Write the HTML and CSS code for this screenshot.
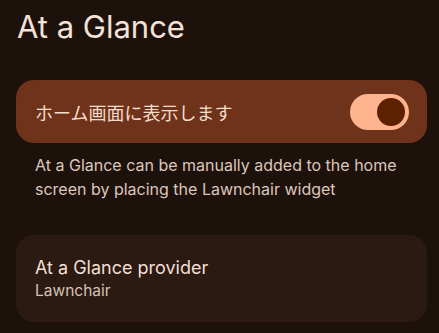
FILE: index.html
```html
<!DOCTYPE html>
<html lang="ja">
<head>
<meta charset="utf-8">
<link rel="stylesheet" href="styles.css">
</head>
<body>
<div class="page">
  <h1 class="title">At a Glance</h1>
  <div class="switch-card">
    <span class="switch-label">ホーム画面に表示します</span>
    <span class="switch"><span class="thumb"></span></span>
  </div>
  <p class="desc">At a Glance can be manually added to the home screen by placing the Lawnchair widget</p>
  <div class="pref-card">
    <div class="pref-title">At a Glance provider</div>
    <div class="pref-sub">Lawnchair</div>
  </div>
</div>
</body>
</html>
```
FILE: styles.css
```css
html, body {
  margin: 0;
  padding: 0;
  background: #1d110b;
}
body {
  width: 439px;
  height: 333px;
  overflow: hidden;
  font-family: Inter, "Noto Sans CJK JP", sans-serif;
}
.page {
  display: flex;
  flex-direction: column;
  padding: 0 12px 0 16px;
}
.title {
  margin: 8px 0 0 1px;
  font-size: 31px;
  font-weight: 400;
  line-height: 38px;
  color: #f5e2d9;
}
.switch-card {
  margin-top: 34px;
  height: 63px;
  border-radius: 18px;
  background: #6e331a;
  display: flex;
  align-items: center;
  justify-content: space-between;
  padding: 0 18px 0 19px;
}
.switch-label {
  font-size: 18px;
  color: #f6dccd;
  font-family: "Noto Sans CJK JP", sans-serif;
}
.switch {
  width: 59px;
  height: 36px;
  border-radius: 18px;
  background: #ffb490;
  display: flex;
  align-items: center;
  justify-content: flex-end;
  padding: 0 4px;
  box-sizing: border-box;
}
.thumb {
  width: 28px;
  height: 28px;
  border-radius: 50%;
  background: #5b2100;
}
.desc {
  margin: 10px 0 0 19px;
  font-size: 16px;
  line-height: 24px;
  color: #dcc6bb;
  max-width: 380px;
}
.pref-card {
  margin-top: 34px;
  height: 87px;
  border-radius: 18px;
  background: #2a1a12;
  display: flex;
  flex-direction: column;
  justify-content: center;
  padding: 0 19px 2px;
  box-sizing: border-box;
}
.pref-title {
  font-size: 18px;
  line-height: 25px;
  color: #f3dfd4;
}
.pref-sub {
  font-size: 15.5px;
  line-height: 21px;
  color: #d6c1b6;
}
```
